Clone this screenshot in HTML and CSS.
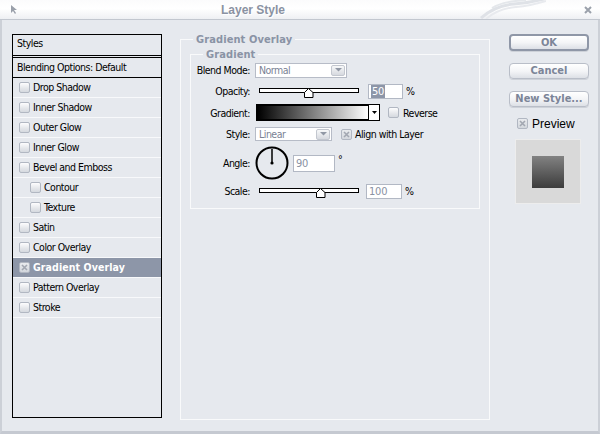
FILE: index.html
```html
<!DOCTYPE html>
<html>
<head>
<meta charset="utf-8">
<link rel="stylesheet" href="styles.css">
</head>
<body>
<div class="window">
  <div class="titlebar">
    <svg class="cursor" width="6" height="9" viewBox="0 0 6 9"><polygon points="0,0 0,8 2,6 4,9 5,8 3,5 6,5" fill="#9aa0aa"/></svg>
    <span class="title">Layer Style</span>
    <svg class="swoosh" width="66" height="19" viewBox="0 0 66 19">
      <path d="M1 18 C10 10 20 5 34 4 C46 3 56 1 64 -1" stroke="#dfe2e7" stroke-width="3" fill="none"/>
      <path d="M6 19 C14 12 24 8 36 7 C48 6 56 4 66 1" stroke="#e8eaee" stroke-width="2" fill="none"/>
      <path d="M12 8 C22 2 34 1 46 0" stroke="#e4e7eb" stroke-width="2" fill="none"/>
    </svg>
    <svg class="close" width="8" height="8" viewBox="0 0 8 8"><path d="M1 1 L7 7 M7 1 L1 7" stroke="#9ba1ab" stroke-width="2"/></svg>
  </div>
  <div class="content">
    <div class="styles-list">
      <div class="list-head">Styles</div>
      <div class="list-blend">Blending Options: Default</div>
      <div class="item"><span class="cb"></span>Drop Shadow</div>
      <div class="item"><span class="cb"></span>Inner Shadow</div>
      <div class="item"><span class="cb"></span>Outer Glow</div>
      <div class="item"><span class="cb"></span>Inner Glow</div>
      <div class="item"><span class="cb"></span>Bevel and Emboss</div>
      <div class="item sub"><span class="cb"></span>Contour</div>
      <div class="item sub"><span class="cb"></span>Texture</div>
      <div class="item"><span class="cb"></span>Satin</div>
      <div class="item"><span class="cb"></span>Color Overlay</div>
      <div class="item active"><span class="cb checked"><svg width="9" height="9" viewBox="0 0 9 9"><path d="M2 2 L7 7 M7 2 L2 7" stroke="#a2a7b1" stroke-width="1.6"/></svg></span>Gradient Overlay</div>
      <div class="item"><span class="cb"></span>Pattern Overlay</div>
      <div class="item"><span class="cb"></span>Stroke</div>
    </div>

    <div class="group outer">
      <div class="group-title">Gradient Overlay</div>
      <div class="group inner">
        <div class="group-title">Gradient</div>

        <div class="row r-blend">
          <span class="lbl">Blend Mode:</span>
          <div class="select sel-blend"><span>Normal</span><span class="dd"><svg width="7" height="4" viewBox="0 0 7 4"><path d="M0 0 H7 L3.5 3.5 Z" fill="#9198a5"/></svg></span></div>
        </div>

        <div class="row r-opacity">
          <span class="lbl">Opacity:</span>
          <div class="slider"><div class="track"></div><svg class="thumb" style="left:45px" width="10" height="10" viewBox="0 0 10 10"><polygon points="4.5,0.5 9,4.5 9,9.5 0.5,9.5 0.5,4.5" fill="#fff" stroke="#000"/></svg></div>
          <div class="input in-opacity"><span class="sel">50</span></div>
          <span class="unit">%</span>
        </div>

        <div class="row r-gradient">
          <span class="lbl">Gradient:</span>
          <div class="gradbox"><div class="grad"></div><div class="garrow"><svg width="5" height="3" viewBox="0 0 5 3"><path d="M0 0 H5 L2.5 3 Z" fill="#000"/></svg></div></div>
          <span class="cb rev"></span><span class="cbtext">Reverse</span>
        </div>

        <div class="row r-style">
          <span class="lbl">Style:</span>
          <div class="select sel-style"><span>Linear</span><span class="dd"><svg width="7" height="4" viewBox="0 0 7 4"><path d="M0 0 H7 L3.5 3.5 Z" fill="#9198a5"/></svg></span></div>
          <span class="cb checked align"><svg width="9" height="9" viewBox="0 0 9 9"><path d="M2 2 L7 7 M7 2 L2 7" stroke="#a2a7b1" stroke-width="1.6"/></svg></span><span class="cbtext tight">Align with Layer</span>
        </div>

        <div class="row r-angle">
          <span class="lbl">Angle:</span>
          <svg class="dial" width="34" height="34" viewBox="0 0 34 34"><circle cx="17" cy="17" r="15.5" fill="none" stroke="#000" stroke-width="2"/><line x1="17" y1="17" x2="17" y2="3" stroke="#000" stroke-width="1.5"/><circle cx="17" cy="17" r="1.6" fill="#000"/></svg>
          <div class="input in-angle">90</div>
          <span class="deg">°</span>
        </div>

        <div class="row r-scale">
          <span class="lbl">Scale:</span>
          <div class="slider"><div class="track"></div><svg class="thumb" style="left:57px" width="10" height="10" viewBox="0 0 10 10"><polygon points="4.5,0.5 9,4.5 9,9.5 0.5,9.5 0.5,4.5" fill="#fff" stroke="#000"/></svg></div>
          <div class="input in-scale">100</div>
          <span class="unit">%</span>
        </div>
      </div>
    </div>

    <div class="side">
      <div class="btn default">OK</div>
      <div class="btn">Cancel</div>
      <div class="btn">New Style...</div>
      <div class="preview-row"><span class="cb checked"><svg width="9" height="9" viewBox="0 0 9 9"><path d="M2 2 L7 7 M7 2 L2 7" stroke="#a2a7b1" stroke-width="1.6"/></svg></span><span class="preview-label">Preview</span></div>
      <div class="preview-box"><div class="preview-swatch"></div></div>
    </div>
  </div>
</div>
</body>
</html>
```
FILE: styles.css
```css
* { box-sizing: border-box; }
html, body { margin: 0; padding: 0; }
body {
  font-family: "DejaVu Sans Condensed", "Liberation Sans", Arial, sans-serif;
  font-size: 10.5px;
  letter-spacing: -0.5px;
  color: #000;
  background: #e6e9ee;
}
.window {
  width: 600px;
  height: 434px;
  background: #e6e9ee;
  border-left: 2px solid #ccd0d7;
  border-right: 2px solid #ccd0d7;
  border-bottom: 3px solid #c5c9d1;
  display: flex;
  flex-direction: column;
}
.titlebar {
  height: 20px;
  flex: none;
  border-bottom: 1px solid #c2c7cf;
  background: linear-gradient(#fbfbfc, #ffffff 45%, #eef0f3);
  display: flex;
  align-items: center;
  margin-left: -2px;
  margin-right: -2px;
}
.cursor { margin-left: 11px; flex: none; }
.title {
  margin-left: 204px;
  font-family: "Liberation Sans", Arial, sans-serif;
  font-size: 12px;
  font-weight: bold;
  letter-spacing: 0;
  color: #8a92a2;
  text-shadow: 0 0 1px #fff, 1px 1px 0 #fff;
  width: 64px;
  white-space: nowrap;
}
.swoosh { margin-left: 195px; align-self: flex-start; flex: none; }
.close { margin-left: 38px; flex: none; }

.content {
  flex: 1;
  display: flex;
  padding: 14px 0 0 10px;
}

/* left list */
.styles-list {
  width: 150px;
  height: 384px;
  border: 1px solid #000;
  flex: none;
}
.list-head {
  height: 23px;
  line-height: 17px;
  padding-left: 4px;
  border-bottom: 3px double #000;
}
.list-blend {
  height: 20px;
  line-height: 18px;
  padding-left: 4px;
  border-bottom: 1px solid #000;
}
.item {
  height: 20px;
  border-bottom: 1px solid #f8f9fb;
  display: flex;
  align-items: center;
  padding-left: 6px;
  padding-bottom: 1px;
}
.item.sub { padding-left: 17px; }
.item.active {
  background: #8d96a8;
  color: #fff;
  font-weight: bold;
  letter-spacing: 0.1px;
}
.item .cb { margin-right: 3px; }

.cb {
  width: 11px;
  height: 11px;
  flex: none;
  border: 1px solid #b1b7c2;
  border-radius: 2px;
  background: linear-gradient(#fdfdfe, #e4e6ea 60%, #d5d9df);
  display: inline-flex;
  align-items: center;
  justify-content: center;
}
.cb.checked { background: linear-gradient(#e9ebee, #d3d7dd); }
.cb svg { display: block; }

/* groups */
.group { position: relative; border: 1px solid #f9fafb; }
.group.outer {
  width: 310px;
  height: 381px;
  margin-left: 18px;
  margin-top: 5px;
  padding: 14px 0 0 9px;
  flex: none;
}
.group.inner {
  width: 290px;
  height: 155px;
  padding-top: 7px;
}
.group-title {
  position: absolute;
  top: -7px;
  left: 12px;
  padding: 0 3px;
  background: #e6e9ee;
  font-size: 11px;
  line-height: 13px;
  font-weight: bold;
  letter-spacing: 0.1px;
  color: #8a93a5;
}

.row { display: flex; align-items: center; }
.r-blend { height: 16px; }
.r-opacity { height: 26px; }
.r-gradient { height: 17px; }
.r-style { height: 26px; }
.r-angle { height: 32px; }
.r-scale { height: 24px; }
.lbl { width: 59px; text-align: right; flex: none; }

.select {
  height: 15px;
  border: 1px solid #b7bcc7;
  background: #fff;
  color: #7a8294;
  padding-left: 3px;
  display: flex;
  align-items: center;
  justify-content: space-between;
  flex: none;
}
.sel-blend { margin-left: 5px; width: 92px; }
.sel-style { margin-left: 5px; width: 77px; height: 14px; }
.dd {
  width: 14px;
  height: 11px;
  margin-right: 1px;
  border: 1px solid #c3c7cf;
  border-radius: 2px;
  background: linear-gradient(#f7f8f9, #d6d9df);
  display: flex;
  align-items: center;
  justify-content: center;
}
.dd svg { display: block; }

.slider {
  position: relative;
  width: 100px;
  height: 10px;
  flex: none;
  margin-left: 9px;
  align-self: flex-start;
}
.r-opacity .slider { margin-top: 10px; }
.r-scale .slider { margin-top: 9px; }
.track {
  height: 5px;
  border: 1px solid #000;
  background: #fff;
}
.thumb { position: absolute; top: 0; display: block; }

.input {
  height: 15px;
  border: 1px solid #b2b8c4;
  background: #fff;
  color: #8a92a3;
  padding-left: 2px;
  font-size: 11px;
  letter-spacing: -0.2px;
  line-height: 13px;
  flex: none;
}
.in-opacity { width: 35px; margin-left: 9px; }
.in-scale { width: 36px; margin-left: 7px; }
.in-angle { width: 42px; height: 17px; line-height: 15px; margin-left: 4px; }
.sel { background: #8d96a8; color: #fff; padding: 0 1px; }
.unit { margin-left: 3px; }
.deg { margin-left: 3px; align-self: flex-start; margin-top: 6px; }

.gradbox {
  margin-left: 6px;
  width: 124px;
  height: 17px;
  border: 1px solid #000;
  display: flex;
  flex: none;
}
.grad {
  flex: 1;
  background: linear-gradient(to right, #000, #fff);
  border: 1px solid #000;
  border-right: none;
}
.garrow {
  width: 11px;
  border-left: 1px solid #000;
  background: #fff;
  display: flex;
  align-items: center;
  justify-content: center;
}
.garrow svg { display: block; }
.rev { margin-left: 8px; }
.cbtext { margin-left: 4px; }
.cbtext.tight { margin-left: 3px; }
.align { margin-left: 9px; }
.dial { margin-left: 5px; flex: none; display: block; }

/* right side */
.side {
  width: 80px;
  margin-left: 19px;
  display: flex;
  flex-direction: column;
  flex: none;
}
.btn {
  height: 16px;
  border: 1px solid #b9bec8;
  border-radius: 4px;
  background: linear-gradient(#ffffff, #f4f5f7 50%, #dde0e6);
  box-shadow: 0 1px 0 #cdd1d8;
  font-weight: bold;
  font-size: 11px;
  letter-spacing: 0;
  color: #7c8598;
  text-align: center;
  line-height: 14px;
}
.btn + .btn { margin-top: 12px; }
.btn.default {
  height: 17px;
  border: 2px solid #8f97a7;
  line-height: 13px;
}
.preview-row {
  margin-top: 10px;
  padding-left: 8px;
  display: flex;
  align-items: center;
  height: 13px;
}
.preview-label {
  margin-left: 4px;
  font-family: "Liberation Sans", Arial, sans-serif;
  font-size: 12px;
  letter-spacing: 0;
}
.preview-box {
  margin-top: 9px;
  margin-left: 6px;
  width: 66px;
  height: 65px;
  background: #d9d9d9;
  border: 1px solid #ededed;
  display: flex;
  align-items: center;
  justify-content: center;
}
.preview-swatch {
  width: 32px;
  height: 32px;
  background: linear-gradient(#828282, #3c3c3c);
}
```
